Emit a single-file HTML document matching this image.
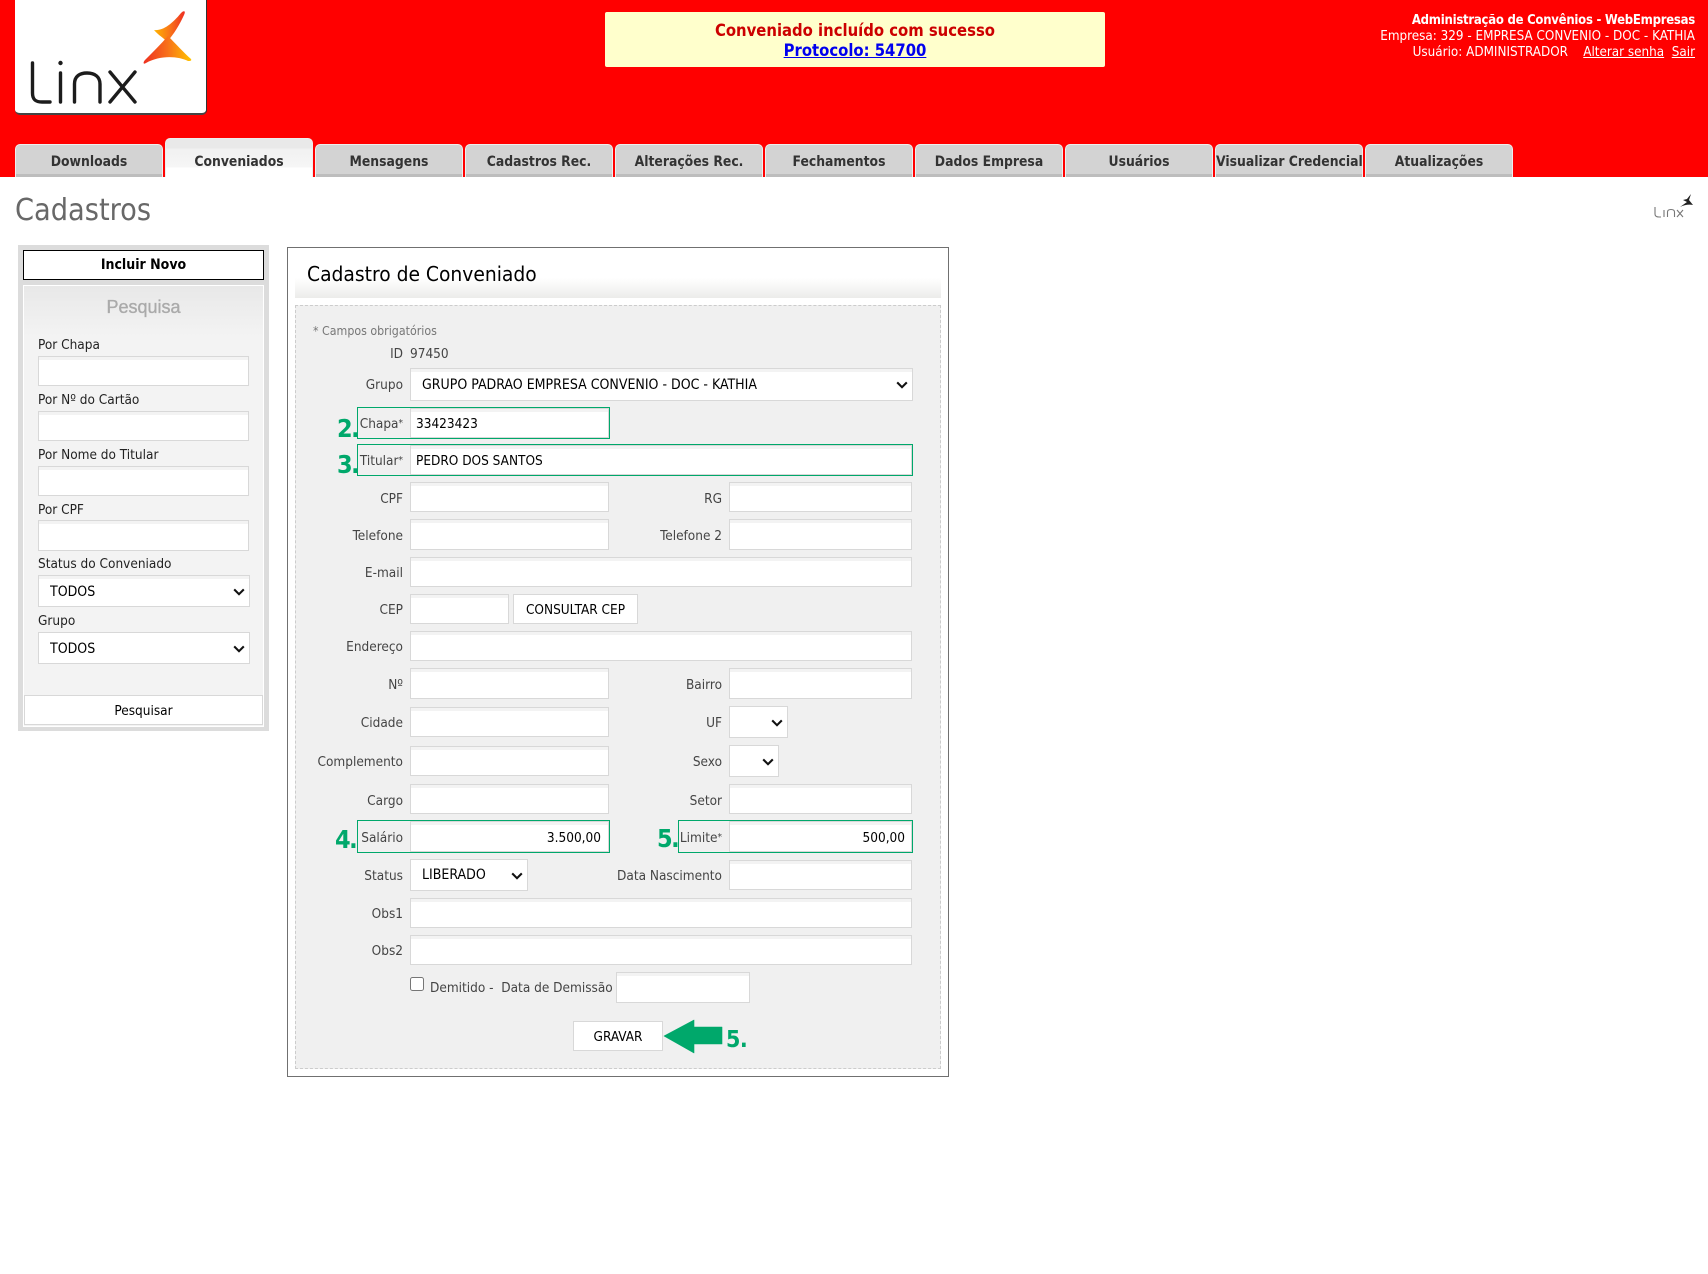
<!DOCTYPE html>
<html lang="pt-BR">
<head>
<meta charset="utf-8">
<title>Cadastro de Conveniado</title>
<style>
html,body{margin:0;padding:0;background:#fff;}
body{position:relative;width:1708px;height:1274px;overflow:hidden;font-family:"DejaVu Sans Condensed","DejaVu Sans","Liberation Sans",sans-serif;font-stretch:condensed;font-size:13.5px;color:#444;}
div,a,span,input,select,button,svg{position:absolute;box-sizing:border-box;}
a span{position:static}
#top{left:0;top:0;width:1708px;height:177px;background:#f00;}
#logo{left:15px;top:0;width:192px;height:115px;background:#fff;border-radius:0 0 5px 5px;border-right:1px solid #333;border-bottom:2px solid #444;}
.tab{top:144px;width:148px;height:33px;background:#d3d3d3;border:1px solid #eee;border-bottom:0;border-radius:5px 5px 0 0;box-shadow:inset 0 -3px 0 #bdbdbd;text-align:center;font-weight:bold;font-size:13.8px;line-height:34px;color:#333;white-space:nowrap;}
.tab.on{top:138px;height:39px;background:linear-gradient(#e9e9e9 0,#e9e9e9 9px,#f1f1f1 10px,#f6f6f6 28px,#fff 29px);border:1px solid #eee;border-bottom:0;box-shadow:none;line-height:46px;}
#msg{left:605px;top:12px;width:500px;height:55px;background:#ffc;border-radius:2px;text-align:center;font-weight:bold;font-size:16.5px;line-height:20px;padding-top:9px;color:#c00;}
#msg a{position:static;color:#00e;text-decoration:underline;}
#info{right:13px;top:12px;width:420px;text-align:right;color:#fff;font-size:13.35px;line-height:16px;padding-top:1px;white-space:nowrap;}
#info b{font-size:13px;letter-spacing:-.25px;}
#info a{position:static;color:#fff;text-decoration:underline;}
#h{left:15px;top:191px;font-size:30.3px;line-height:40px;color:#686868;white-space:nowrap;}
#side{left:18px;top:245px;width:251px;height:486px;background:#dcdcdc;}
#novo{left:23px;top:250px;width:241px;height:30px;background:#fff;border:1.5px solid #000;text-align:center;font-weight:bold;font-size:14px;line-height:29px;color:#000;}
#ppanel{left:23px;top:285px;width:241px;height:442px;border:1px solid #fff;background:linear-gradient(#e8e8e8,#f3f3f3 50px);}
#ptit{left:23px;top:294px;width:241px;text-align:center;font-family:"Liberation Sans",sans-serif;font-stretch:normal;font-weight:normal;-webkit-text-stroke:.35px #aaa;font-size:18px;line-height:26px;color:#aaa;}
.sl{left:38px;height:20px;line-height:22px;color:#222;white-space:nowrap;font-size:13.5px;}
input[type=text],select{border:1px solid #d8d8d8;background:linear-gradient(#f3f3f3 3px,#fff 3px);margin:0;border-radius:0;font-family:inherit;font-stretch:condensed;color:#000;outline:0;}
input[type=text]{padding:2px 5px 0 5px;font-size:13.5px;}
select{padding-left:7px;background:#fff;font-size:14px;-webkit-appearance:none;appearance:none;}
.ch{width:12px;height:8px;}
.btn{background:#fff;border:1px solid #d8d8d8;text-align:center;color:#000;font-size:13.5px;white-space:nowrap;}
#main{left:287px;top:247px;width:662px;height:830px;border:1px solid #707070;background:#fff;}
#tbar{left:295px;top:250px;width:646px;height:48px;background:linear-gradient(#fff 0,#fff 28px,#ececea 48px);}
#ttl{left:307px;top:260px;font-size:20.8px;line-height:28px;color:#000;white-space:nowrap;}
#fs{left:295px;top:305px;width:646px;height:764px;border:1px dashed #ccc;background:#f0f0f0;}
.l{right:1305px;height:20px;line-height:22px;white-space:nowrap;text-align:right;}
.r{right:986px;height:20px;line-height:22px;white-space:nowrap;text-align:right;}
.g{border:1px solid #00a86b;}
.n{font-weight:bold;color:#00a86b;font-size:25px;line-height:30px;letter-spacing:-1.5px;white-space:nowrap;}
.v{height:20px;line-height:22px;color:#000;white-space:nowrap;}
</style>
</head>
<body>
<div id="top"></div>
<div id="logo"></div>
<svg style="left:15px;top:0" width="190" height="113" viewBox="15 0 190 113">
<defs>
<linearGradient id="b" x1="0" y1="0" x2="1" y2="0"><stop offset="0" stop-color="#ffb400"/><stop offset=".55" stop-color="#f8701a"/><stop offset="1" stop-color="#ee2e22"/></linearGradient>
<linearGradient id="c" x1="0" y1="0" x2="1" y2="0"><stop offset="0" stop-color="#ee3020"/><stop offset=".5" stop-color="#f8701a"/><stop offset="1" stop-color="#ffc400"/></linearGradient>
</defs>
<path d="M154 30C163 31 172 24 181 13C184 10 186 11 184 15C180 24 174 34 167 42C164 38 158 35 154 30Z" fill="url(#b)"/>
<path d="M146 63C143 65 143 62 145 60C153 52 161 44 168 36C175 43 184 53 191 59C192 61 190 61 188 61C178 56 160 55 146 63Z" fill="url(#c)"/>
<g fill="none" stroke="#1c1c1c" stroke-width="3.4" stroke-linecap="round" stroke-linejoin="round">
<path d="M32.5 63V93C32.5 100 36 102 42 102H50"/>
<path d="M60.5 73V102"/>
<path d="M74.5 102V84C74.5 76 80 73 87 73C95 73 100 77 100 84V102"/>
<path d="M110 72L135 102M135 72L110 102"/>
</g>
<circle cx="60.5" cy="63" r="2.2" fill="#1c1c1c"/>
</svg>

<div class="tab" style="left:15px">Downloads</div>
<div class="tab on" style="left:165px">Conveniados</div>
<div class="tab" style="left:315px">Mensagens</div>
<div class="tab" style="left:465px">Cadastros Rec.</div>
<div class="tab" style="left:615px">Alterações Rec.</div>
<div class="tab" style="left:765px">Fechamentos</div>
<div class="tab" style="left:915px">Dados Empresa</div>
<div class="tab" style="left:1065px">Usuários</div>
<div class="tab" style="left:1215px">Visualizar Credencial</div>
<div class="tab" style="left:1365px">Atualizações</div>

<div id="msg">Conveniado incluído com sucesso<br><a href="#">Protocolo: 54700</a></div>
<div id="info"><b>Administração de Convênios - WebEmpresas</b><br>Empresa: 329 - EMPRESA CONVENIO - DOC - KATHIA<br>Usuário: ADMINISTRADOR &nbsp;&nbsp; <a href="#">Alterar senha</a> &nbsp;<a href="#">Sair</a></div>

<div id="h">Cadastros</div>
<svg style="left:1654px;top:193px" width="40" height="26" viewBox="0 0 40 26">
<g fill="none" stroke="#777" stroke-width="1.1"><path d="M1 14V21C1 23 2 24 5 24H7"/><path d="M10 17V24"/><path d="M13.5 24V19C13.5 17 15 16.5 17 16.5C19 16.5 20.5 17 20.5 19V24"/><path d="M23 17L29 24M29 17L23 24"/></g>
<path d="M37 1L33 6L29 7L33 9L26 14C30 12 35 11 39 12L35 7Z" fill="#222"/>
</svg>

<div id="side"></div>
<div id="novo">Incluir Novo</div>
<div id="ppanel"></div>
<div id="ptit">Pesquisa</div>
<div class="sl" style="top:334px">Por Chapa</div>
<input type="text" style="left:38px;top:356px;width:211px;height:30px">
<div class="sl" style="top:389px">Por Nº do Cartão</div>
<input type="text" style="left:38px;top:411px;width:211px;height:30px">
<div class="sl" style="top:444px">Por Nome do Titular</div>
<input type="text" style="left:38px;top:466px;width:211px;height:30px">
<div class="sl" style="top:499px">Por CPF</div>
<input type="text" style="left:38px;top:520px;width:211px;height:31px">
<div class="sl" style="top:553px">Status do Conveniado</div>
<select style="left:38px;top:575px;width:212px;height:32px;background:linear-gradient(#f3f3f3 3px,#fff 3px);padding-top:2px;padding-left:11px"><option>TODOS</option></select>
<svg class="ch" style="left:233px;top:588px" viewBox="0 0 12 8"><path d="M1.2 1.4L6 6.2L10.8 1.4" fill="none" stroke="#111" stroke-width="2.1"/></svg>
<div class="sl" style="top:610px">Grupo</div>
<select style="left:38px;top:632px;width:212px;height:32px;padding-top:2px;padding-left:11px"><option>TODOS</option></select>
<svg class="ch" style="left:233px;top:645px" viewBox="0 0 12 8"><path d="M1.2 1.4L6 6.2L10.8 1.4" fill="none" stroke="#111" stroke-width="2.1"/></svg>
<div class="btn" style="left:24px;top:695px;width:239px;height:30px;line-height:30px">Pesquisar</div>

<div id="main"></div>
<div id="tbar"></div>
<div id="ttl">Cadastro de Conveniado</div>
<div id="fs"></div>
<div style="left:313px;top:321px;height:20px;line-height:20px;color:#777;font-size:12.3px;white-space:nowrap">* Campos obrigatórios</div>

<div class="l" style="top:343px">ID</div>
<div class="v" style="left:410px;top:343px;color:#444">97450</div>

<div class="l" style="top:374px">Grupo</div>
<select style="left:410px;top:368px;width:503px;height:33px;padding-left:11px;background:linear-gradient(#f3f3f3 3px,#fff 3px)"><option>GRUPO PADRAO EMPRESA CONVENIO - DOC - KATHIA</option></select>
<svg class="ch" style="left:896px;top:381px" viewBox="0 0 12 8"><path d="M1.2 1.4L6 6.2L10.8 1.4" fill="none" stroke="#111" stroke-width="2.1"/></svg>

<div class="g" style="left:357px;top:407px;width:253px;height:32px"></div>
<div class="l" style="top:413px">Chapa<span style="position:static;font-size:10px;vertical-align:2px">*</span></div>
<input type="text" value="33423423" style="left:410px;top:408px;width:199px;height:30px">
<div class="n" style="left:337px;top:414px">2.</div>

<div class="g" style="left:357px;top:444px;width:556px;height:32px"></div>
<div class="l" style="top:450px">Titular<span style="position:static;font-size:10px;vertical-align:2px">*</span></div>
<input type="text" value="PEDRO DOS SANTOS" style="left:410px;top:445px;width:502px;height:30px">
<div class="n" style="left:337px;top:450px">3.</div>

<div class="l" style="top:488px">CPF</div>
<input type="text" style="left:410px;top:482px;width:199px;height:30px">
<div class="r" style="top:488px">RG</div>
<input type="text" style="left:729px;top:482px;width:183px;height:30px">

<div class="l" style="top:525px">Telefone</div>
<input type="text" style="left:410px;top:519px;width:199px;height:31px">
<div class="r" style="top:525px">Telefone 2</div>
<input type="text" style="left:729px;top:519px;width:183px;height:31px">

<div class="l" style="top:562px">E-mail</div>
<input type="text" style="left:410px;top:557px;width:502px;height:30px">

<div class="l" style="top:599px">CEP</div>
<input type="text" style="left:410px;top:594px;width:99px;height:30px">
<div class="btn" style="left:513px;top:594px;width:125px;height:30px;line-height:30px">CONSULTAR CEP</div>

<div class="l" style="top:636px">Endereço</div>
<input type="text" style="left:410px;top:631px;width:502px;height:30px">

<div class="l" style="top:674px">Nº</div>
<input type="text" style="left:410px;top:668px;width:199px;height:31px">
<div class="r" style="top:674px">Bairro</div>
<input type="text" style="left:729px;top:668px;width:183px;height:31px">

<div class="l" style="top:712px">Cidade</div>
<input type="text" style="left:410px;top:707px;width:199px;height:30px">
<div class="r" style="top:712px">UF</div>
<select style="left:729px;top:706px;width:59px;height:32px"><option></option></select>
<svg class="ch" style="left:771px;top:719px" viewBox="0 0 12 8"><path d="M1.2 1.4L6 6.2L10.8 1.4" fill="none" stroke="#111" stroke-width="2.1"/></svg>

<div class="l" style="top:751px">Complemento</div>
<input type="text" style="left:410px;top:746px;width:199px;height:30px">
<div class="r" style="top:751px">Sexo</div>
<select style="left:729px;top:745px;width:50px;height:32px"><option></option></select>
<svg class="ch" style="left:762px;top:758px" viewBox="0 0 12 8"><path d="M1.2 1.4L6 6.2L10.8 1.4" fill="none" stroke="#111" stroke-width="2.1"/></svg>

<div class="l" style="top:790px">Cargo</div>
<input type="text" style="left:410px;top:784px;width:199px;height:30px">
<div class="r" style="top:790px">Setor</div>
<input type="text" style="left:729px;top:784px;width:183px;height:30px">

<div class="g" style="left:357px;top:820px;width:253px;height:33px"></div>
<div class="l" style="top:827px">Salário</div>
<input type="text" value="3.500,00" style="left:410px;top:821px;width:199px;height:31px;text-align:right;padding-right:7px">
<div class="n" style="left:335px;top:825px">4.</div>

<div class="g" style="left:678px;top:820px;width:235px;height:33px"></div>
<div class="r" style="top:827px">Limite<span style="position:static;font-size:10px;vertical-align:2px">*</span></div>
<input type="text" value="500,00" style="left:729px;top:821px;width:183px;height:31px;text-align:right;padding-right:6px">
<div class="n" style="left:657px;top:824px">5.</div>

<div class="l" style="top:865px">Status</div>
<select style="left:410px;top:859px;width:118px;height:32px;padding-left:11px"><option>LIBERADO</option></select>
<svg class="ch" style="left:511px;top:872px" viewBox="0 0 12 8"><path d="M1.2 1.4L6 6.2L10.8 1.4" fill="none" stroke="#111" stroke-width="2.1"/></svg>
<div class="r" style="top:865px">Data Nascimento</div>
<input type="text" style="left:729px;top:860px;width:183px;height:30px">

<div class="l" style="top:903px">Obs1</div>
<input type="text" style="left:410px;top:898px;width:502px;height:30px">

<div class="l" style="top:940px">Obs2</div>
<input type="text" style="left:410px;top:935px;width:502px;height:30px">

<input type="checkbox" style="left:410px;top:977px;width:14px;height:14px;margin:0;position:absolute">
<div class="v" style="left:430px;top:977px;color:#444">Demitido - &nbsp;Data de Demissão</div>
<input type="text" style="left:616px;top:972px;width:134px;height:31px">

<div class="btn" style="left:573px;top:1021px;width:90px;height:30px;line-height:30px">GRAVAR</div>
<svg style="left:660px;top:1016px" width="66" height="40" viewBox="660 1016 66 40"><path d="M664 1036L694 1020V1027H722V1044H694V1053Z" fill="#00a86b" stroke="#00a86b" stroke-width=".6" stroke-linejoin="round"/></svg>
<div class="n" style="left:726px;top:1025px;font-size:23px;letter-spacing:-.5px">5.</div>
</body>
</html>
